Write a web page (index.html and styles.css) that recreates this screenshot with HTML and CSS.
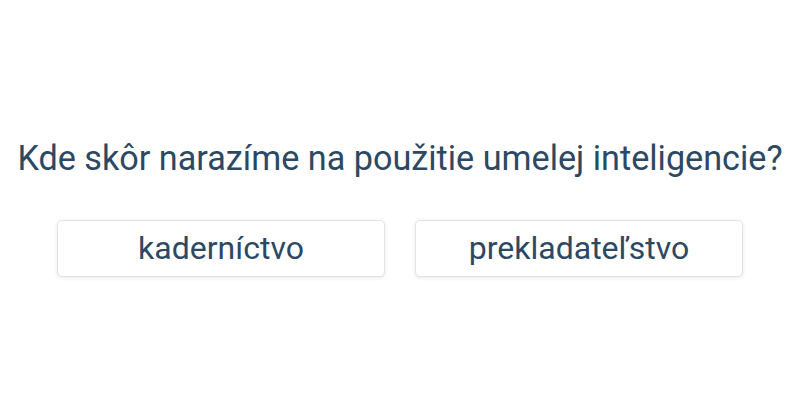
FILE: index.html
```html
<!DOCTYPE html>
<html lang="sk">
<head>
<meta charset="utf-8">
<link rel="stylesheet" href="styles.css">
</head>
<body>
<main class="quiz">
  <h1 class="question">Kde skôr narazíme na použitie umelej inteligencie?</h1>
  <div class="options">
    <button class="option">kaderníctvo</button>
    <button class="option">prekladateľstvo</button>
  </div>
</main>
</body>
</html>
```
FILE: styles.css
```css
html, body {
  margin: 0;
  padding: 0;
  background: #ffffff;
}
body {
  font-family: Roboto, "Noto Sans", sans-serif;
  color: #2c4862;
}
.quiz {
  box-sizing: border-box;
  height: 400px;
  padding-top: 14px;
  display: flex;
  flex-direction: column;
  align-items: center;
  justify-content: center;
}
.question {
  margin: 0 0 42px 0;
  font-size: 34.2px;
  font-weight: 400;
  line-height: 40px;
  text-align: center;
  color: #2c4862;
  white-space: nowrap;
}
.options {
  display: flex;
  gap: 30px;
}
.option {
  width: 328px;
  height: 57px;
  background: #fff;
  border: 1px solid #e2e2e2;
  border-radius: 5px;
  box-shadow: 0 1px 4px rgba(0,0,0,0.09);
  font-family: Roboto, "Noto Sans", sans-serif;
  font-size: 32px;
  color: #2c4862;
  padding: 0;
  cursor: pointer;
}
```
